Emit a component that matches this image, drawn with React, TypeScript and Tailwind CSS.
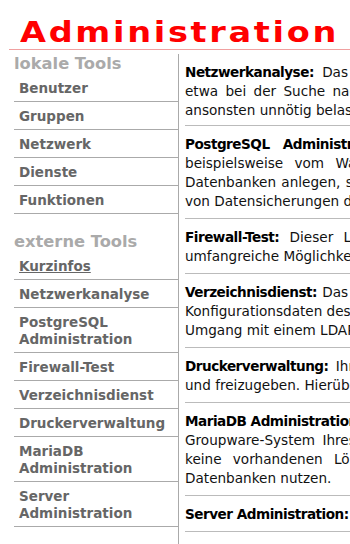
import type { ReactNode } from 'react';

const localTools = ['Benutzer', 'Gruppen', 'Netzwerk', 'Dienste', 'Funktionen'];

const externalTools: { label: ReactNode; underline?: boolean }[] = [
	{ label: 'Kurzinfos', underline: true },
	{ label: 'Netzwerkanalyse' },
	{ label: <>PostgreSQL<br />Administration</> },
	{ label: 'Firewall-Test' },
	{ label: 'Verzeichnisdienst' },
	{ label: 'Druckerverwaltung' },
	{ label: <>MariaDB<br />Administration</> },
	{ label: <>Server<br />Administration</> },
];

// each paragraph is given line by line, the page is cut off at the right edge
const entries: { title: string; lines: { text: string; cls?: string }[] }[] = [
	{
		title: 'Netzwerkanalyse:',
		lines: [
			{ text: ' Das Werkzeug hilft Ihnen', cls: '[word-spacing:4px]' },
			{ text: 'etwa bei der Suche nach Rechnern, die das Netz', cls: '[word-spacing:3px]' },
			{ text: 'ansonsten unnötig belasten.' },
		],
	},
	{
		title: 'PostgreSQL Administration:',
		lines: [
			{ text: ' Hiermit können Sie', cls: '[word-spacing:9px]' },
			{ text: 'beispielsweise vom Warenwirtschaftssystem', cls: '[word-spacing:7px]' },
			{ text: 'Datenbanken anlegen, sowie bearbeiten und sich', cls: '[word-spacing:1px]' },
			{ text: 'von Datensicherungen der Datenbanken überzeugen.' },
		],
	},
	{
		title: 'Firewall-Test:',
		lines: [
			{ text: ' Dieser Link bietet Ihnen', cls: '[word-spacing:6px]' },
			{ text: 'umfangreiche Möglichkeiten, Ihre Firewall zu testen.' },
		],
	},
	{
		title: 'Verzeichnisdienst:',
		lines: [
			{ text: ' Das Programm zeigt Ihnen die', cls: '[word-spacing:1px]' },
			{ text: 'Konfigurationsdaten des Servers und erleichtert' },
			{ text: 'Umgang mit einem LDAP-Tool.' },
		],
	},
	{
		title: 'Druckerverwaltung:',
		lines: [
			{ text: ' Ihre Drucker einzurichten', cls: '[word-spacing:3px]' },
			{ text: 'und freizugeben. Hierüber können Sie' },
		],
	},
	{
		title: 'MariaDB Administration:',
		lines: [
			{ text: ' Hier verwalten Sie das' },
			{ text: 'Groupware-System Ihres Servers. Löschen Sie', cls: '[word-spacing:3px]' },
			{ text: 'keine vorhandenen Löschvorgänge der genutzten', cls: '[word-spacing:7px]' },
			{ text: 'Datenbanken nutzen.' },
		],
	},
	{
		title: 'Server Administration:',
		lines: [{ text: ' Hier verwalten Sie den Server.' }],
	},
];

function MenuItem({ children, underline }: { children: ReactNode; underline?: boolean }) {
	return (
		<div className="border-b border-[#aaaaaa] pl-[5px] pt-[6px] pb-[4px] text-[13.5px] font-bold leading-[17px] text-[#666666]">
			<span className={underline ? 'underline' : ''}>{children}</span>
		</div>
	);
}

export default function App() {
	return (
		<div className="h-[544px] w-[350px] overflow-hidden bg-white font-['DejaVu_Sans',Verdana,sans-serif]">
			<div className="w-[600px] pl-[9px]">
				{/* Header */}
				<div className="h-[50px] w-[341px] border-b border-[#f0a0a0] pl-[11px] pt-[17px]">
					<h1 className="origin-left scale-x-[1.22] text-[27.5px] font-bold leading-[30px] tracking-[2.2px] text-[#ff0000]">
						Administration
					</h1>
				</div>

				<div className="mt-[4px] flex">
					{/* Navigation */}
					<div className="h-[500px] w-[170px] shrink-0 border-r border-[#aaaaaa] pl-[5px]">
						<div className="text-[16.3px] font-bold leading-[20px] text-[#aaaaaa]">lokale Tools</div>
						{localTools.map((t) => (
							<MenuItem key={t}>{t}</MenuItem>
						))}
						<div className="mt-[18px] text-[16.3px] font-bold leading-[20px] text-[#aaaaaa]">
							externe Tools
						</div>
						{externalTools.map((t, i) => (
							<MenuItem key={i} underline={t.underline}>
								{t.label}
							</MenuItem>
						))}
					</div>

					{/* Content */}
					<div className="ml-[6px] w-[400px] text-[13.6px] leading-[19px] text-[#111111]">
						{entries.map((e) => (
							<div key={e.title} className="border-b border-[#bbbbbb] pt-[9px] pb-[7px] first:pb-[5px]">
								{e.lines.map((l, i) => (
									<div key={i} className={`whitespace-nowrap ${l.cls ?? ''}`}>
										{i === 0 && <b className="tracking-[-0.5px] text-black">{e.title}</b>}
										{l.text}
									</div>
								))}
							</div>
						))}
					</div>
				</div>
			</div>
		</div>
	);
}
